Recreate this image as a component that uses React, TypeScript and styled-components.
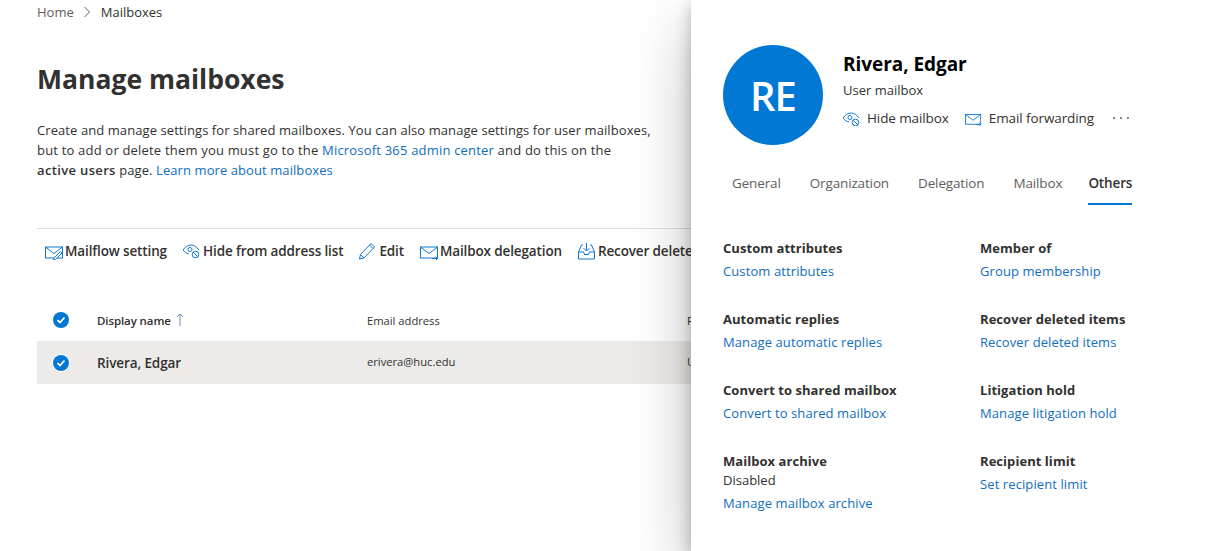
import styled, { createGlobalStyle } from 'styled-components';

const GlobalStyle = createGlobalStyle`
  html, body {
    margin: 0;
    padding: 0;
    background: #fff;
    font-family: 'Open Sans', 'Noto Sans', sans-serif;
    color: #323130;
  }
`;

const Page = styled.div`
  position: relative;
  width: 1226px;
  height: 551px;
  overflow: hidden;
  background: #fff;
`;

const Main = styled.main`
  width: 691px;
  height: 551px;
  overflow: hidden;
  padding-left: 37px;
  box-sizing: border-box;
`;

const Breadcrumb = styled.nav`
  display: flex;
  align-items: center;
  height: 24px;
  font-size: 13px;
  color: #323130;
`;

const Crumb = styled.span<{ $muted?: boolean }>`
  color: ${(p) => (p.$muted ? '#605e5c' : '#323130')};
`;

const Chevron = styled.svg`
  width: 8px;
  height: 12px;
  margin: 0 10px 0 9px;
`;

const Title = styled.h1`
  margin: 37px 0 0;
  font-size: 26.5px;
  line-height: 36px;
  font-weight: 700;
  color: #323130;
`;

const Intro = styled.p`
  margin: 23px 0 0;
  font-size: 13px;
  line-height: 20px;
  color: #323130;
`;

const IntroLine = styled.span<{ $tracking: number }>`
  display: block;
  letter-spacing: ${(p) => p.$tracking}px;
  white-space: nowrap;
`;

const Link = styled.a`
  color: #106ebe;
  text-decoration: none;
`;

const Strong = styled.b`
  font-weight: 600;
  letter-spacing: 0.35px;
`;

const Toolbar = styled.div`
  display: flex;
  align-items: center;
  gap: 16px;
  margin-top: 48px;
  height: 43px;
  padding: 0 0 2px 8px;
  border-top: 1px solid #e1dfdd;
  white-space: nowrap;
`;

const ToolButton = styled.span`
  display: flex;
  align-items: center;
  font-size: 13.5px;
  font-weight: 600;
  letter-spacing: -0.13px;
  color: #323130;
`;

const ToolIcon = styled.svg`
  width: 20px;
  height: 18px;
  fill: none;
  stroke: #0f78d4;
  stroke-width: 1;
`;

const TableRow = styled.div<{ $selected?: boolean }>`
  display: grid;
  grid-template-columns: 60px 270px 320px 1fr;
  align-items: center;
  height: ${(p) => (p.$selected ? '43px' : '42px')};
  background: ${(p) => (p.$selected ? '#edebe9' : 'transparent')};
  white-space: nowrap;
`;

const HeaderRow = styled(TableRow)`
  margin-top: 25px;
`;

const CheckCell = styled.span`
  display: flex;
  padding-left: 16px;
`;

const Check = styled.span<{ $ring?: boolean }>`
  display: flex;
  align-items: center;
  justify-content: center;
  width: 16px;
  height: 16px;
  border-radius: 50%;
  background: #0078d4;
  box-shadow: ${(p) => (p.$ring ? '0 0 0 1px #fff' : 'none')};
`;

const HeadCell = styled.span`
  display: flex;
  align-items: center;
  font-size: 11.2px;
  font-weight: 400;
  color: #323130;
`;

const NameHead = styled(HeadCell)`
  font-size: 11.5px;
  font-weight: 600;
  letter-spacing: -0.1px;
`;

const SortArrow = styled.svg`
  width: 10px;
  height: 14px;
  margin-left: 4px;
  fill: none;
  stroke: #6f8db0;
`;

const NameCell = styled.span`
  font-size: 13.5px;
  font-weight: 600;
  letter-spacing: -0.1px;
  color: #323130;
`;

const BodyCell = styled.span`
  font-size: 11.2px;
  margin-top: -2px;
  color: #323130;
`;

const Panel = styled.aside`
  position: absolute;
  top: 0;
  right: 0;
  bottom: 0;
  width: 535px;
  box-sizing: border-box;
  padding: 45px 0 0 32px;
  background: #fff;
  box-shadow: 0 25.6px 57.6px rgba(0, 0, 0, 0.26), 0 4.8px 14.4px rgba(0, 0, 0, 0.24);
`;

const PanelHead = styled.header`
  display: flex;
  gap: 20px;
`;

const Avatar = styled.div`
  flex: none;
  display: flex;
  align-items: center;
  justify-content: center;
  width: 100px;
  height: 100px;
  border-radius: 50%;
  background: #0078d4;
  color: #fff;
  font-size: 40px;
  font-weight: 600;
  letter-spacing: -1px;
`;

const HeadText = styled.div`
  padding-top: 5px;
`;

const UserName = styled.div`
  font-size: 19px;
  line-height: 28px;
  font-weight: 700;
  letter-spacing: -0.05px;
  color: #000;
`;

const UserType = styled.div`
  margin-top: 3px;
  font-size: 13px;
  line-height: 18px;
`;

const Actions = styled.div`
  display: flex;
  align-items: center;
  margin-top: 10px;
  font-size: 13.5px;
  letter-spacing: -0.1px;
  white-space: nowrap;
`;

const Action = styled.span`
  display: flex;
  align-items: center;
  gap: 6px;
  margin-right: 16px;
`;

const ActionIcon = styled.svg`
  width: 18px;
  height: 16px;
  fill: none;
  stroke: #0f78d4;
  stroke-width: 1;
`;

const More = styled.span`
  display: flex;
  gap: 5px;
  margin-left: 3px;
`;

const Dot = styled.i`
  width: 2px;
  height: 2px;
  border-radius: 50%;
  background: #605e5c;
`;

const Tabs = styled.div`
  display: flex;
  gap: 29px;
  margin: 28px 0 0 9px;
  height: 32px;
`;

const Tab = styled.span<{ $active?: boolean }>`
  height: 30px;
  margin-left: ${(p) => (p.$active ? '-3px' : '0')};
  font-size: 13.5px;
  line-height: 20px;
  letter-spacing: -0.14px;
  font-weight: ${(p) => (p.$active ? 600 : 400)};
  color: ${(p) => (p.$active ? '#323130' : '#605e5c')};
  border-bottom: 2px solid ${(p) => (p.$active ? '#0078d4' : 'transparent')};
`;

const Grid = styled.div`
  display: grid;
  grid-template-columns: 257px 1fr;
  margin-top: 33px;
  row-gap: 19px;
`;

const Block = styled.div`
  min-height: 52px;
`;

const BlockTitle = styled.div`
  font-size: 13px;
  line-height: 20px;
  font-weight: 700;
  letter-spacing: 0.05px;
  color: #323130;
`;

const BlockText = styled.div`
  margin-bottom: 4px;
  font-size: 13px;
  line-height: 18px;
`;

const BlockLink = styled(Link)`
  display: block;
  margin-top: 3px;
  font-size: 13px;
  line-height: 20px;
  letter-spacing: 0.1px;
`;

const MailIcon = () => (
  <>
    <rect x="0.500" y="5" width="17" height="11" />
    <path d="M.5 5 9 11.500 17.500 5" />
  </>
);

const ForwardArrow = () => <path d="M12 16.500h5.500m-2-2 2 2-2 2" fill="#fff" />;

const blocks = [
  { title: 'Custom attributes', link: 'Custom attributes' },
  { title: 'Member of', link: 'Group membership' },
  { title: 'Automatic replies', link: 'Manage automatic replies' },
  { title: 'Recover deleted items', link: 'Recover deleted items' },
  { title: 'Convert to shared mailbox', link: 'Convert to shared mailbox' },
  { title: 'Litigation hold', link: 'Manage litigation hold' },
  { title: 'Mailbox archive', text: 'Disabled', link: 'Manage mailbox archive' },
  { title: 'Recipient limit', link: 'Set recipient limit' },
];

const HideIcon = () => (
  <>
    <path d="M1 8c2-3 5-5 8-5 3 0 6 2 8 5" />
    <path d="M1 8c1.500 2 3.500 3.500 6 4" />
    <circle cx="8" cy="7.500" r="2" />
    <circle cx="13.500" cy="12.500" r="3.300" fill="#fff" />
    <path d="m11.300 10.300 4.400 4.400" />
  </>
);

const CheckMark = () => (
  <svg width="10" height="10" viewBox="0 0 10 10" fill="none" stroke="#fff" strokeWidth="1.800">
    <path d="M1.500 5.200 4 7.500l4.500-5" />
  </svg>
);

export default function App() {
  return (
    <Page>
      <GlobalStyle />
      <Main>
        <Breadcrumb>
          <Crumb $muted>Home</Crumb>
          <Chevron viewBox="0 0 8 12" fill="none" stroke="#605e5c">
            <path d="m1.500 1 5 5-5 5" />
          </Chevron>
          <Crumb>Mailboxes</Crumb>
        </Breadcrumb>
        <Title>Manage mailboxes</Title>
        <Intro>
          <IntroLine $tracking={0.08}>
            Create and manage settings for shared mailboxes. You can also manage settings for user mailboxes,
          </IntroLine>
          <IntroLine $tracking={0.19}>
            but to add or delete them you must go to the <Link>Microsoft 365 admin center</Link> and do this on the
          </IntroLine>
          <IntroLine $tracking={0.08}>
            <Strong>active users</Strong> page. <Link>Learn more about mailboxes</Link>
          </IntroLine>
        </Intro>
        <Toolbar>
          <ToolButton>
            <ToolIcon viewBox="0 0 20 18">
              <MailIcon />
              <path d="m9 16 6.500-6.500 1.500 1.500-6.500 6.500-2 .5z" fill="#fff" />
            </ToolIcon>
            Mailflow setting
          </ToolButton>
          <ToolButton>
            <ToolIcon viewBox="1 0 20 18">
              <HideIcon />
            </ToolIcon>
            Hide from address list
          </ToolButton>
          <ToolButton>
            <ToolIcon viewBox="0 0 20 18">
              <path d="m.5 17 1-4.500L12 1.500l3.500 3.500L5 16z" />
              <path d="m10.500 3 3.500 3.500M1.500 12.500l3.500 3.500" />
            </ToolIcon>
            Edit
          </ToolButton>
          <ToolButton>
            <ToolIcon viewBox="0 0 20 18">
              <MailIcon />
              <ForwardArrow />
            </ToolIcon>
            Mailbox delegation
          </ToolButton>
          <ToolButton>
            <ToolIcon viewBox="0 0 20 18">
              <path d="M5 3H3.500L.5 10v7h16v-7l-3-7H12" />
              <path d="M.5 10h5l1 2.500h4l1-2.500h5" />
              <path d="M8.500 1v8M5.500 6l3 3 3-3" />
            </ToolIcon>
            Recover deleted items
          </ToolButton>
        </Toolbar>
        <HeaderRow>
          <CheckCell>
            <Check>
              <CheckMark />
            </Check>
          </CheckCell>
          <NameHead>
            Display name
            <SortArrow viewBox="0 0 10 14">
              <path d="M5 13V1M2 4l3-3 3 3" />
            </SortArrow>
          </NameHead>
          <HeadCell>Email address</HeadCell>
          <HeadCell>Recipient type</HeadCell>
        </HeaderRow>
        <TableRow $selected>
          <CheckCell>
            <Check $ring>
              <CheckMark />
            </Check>
          </CheckCell>
          <NameCell>Rivera, Edgar</NameCell>
          <BodyCell>erivera@huc.edu</BodyCell>
          <BodyCell>User mailbox</BodyCell>
        </TableRow>
      </Main>
      <Panel>
        <PanelHead>
          <Avatar>RE</Avatar>
          <HeadText>
            <UserName>Rivera, Edgar</UserName>
            <UserType>User mailbox</UserType>
            <Actions>
              <Action>
                <ActionIcon viewBox="1 0 18 16">
                  <HideIcon />
                </ActionIcon>
                Hide mailbox
              </Action>
              <Action>
                <ActionIcon viewBox="0 0 20 18">
                  <MailIcon />
                  <ForwardArrow />
                </ActionIcon>
                Email forwarding
              </Action>
              <More>
                <Dot />
                <Dot />
                <Dot />
              </More>
            </Actions>
          </HeadText>
        </PanelHead>
        <Tabs>
          <Tab>General</Tab>
          <Tab>Organization</Tab>
          <Tab>Delegation</Tab>
          <Tab>Mailbox</Tab>
          <Tab $active>Others</Tab>
        </Tabs>
        <Grid>
          {blocks.map((b) => (
            <Block key={b.title}>
              <BlockTitle>{b.title}</BlockTitle>
              {b.text && <BlockText>{b.text}</BlockText>}
              <BlockLink>{b.link}</BlockLink>
            </Block>
          ))}
        </Grid>
      </Panel>
    </Page>
  );
}
